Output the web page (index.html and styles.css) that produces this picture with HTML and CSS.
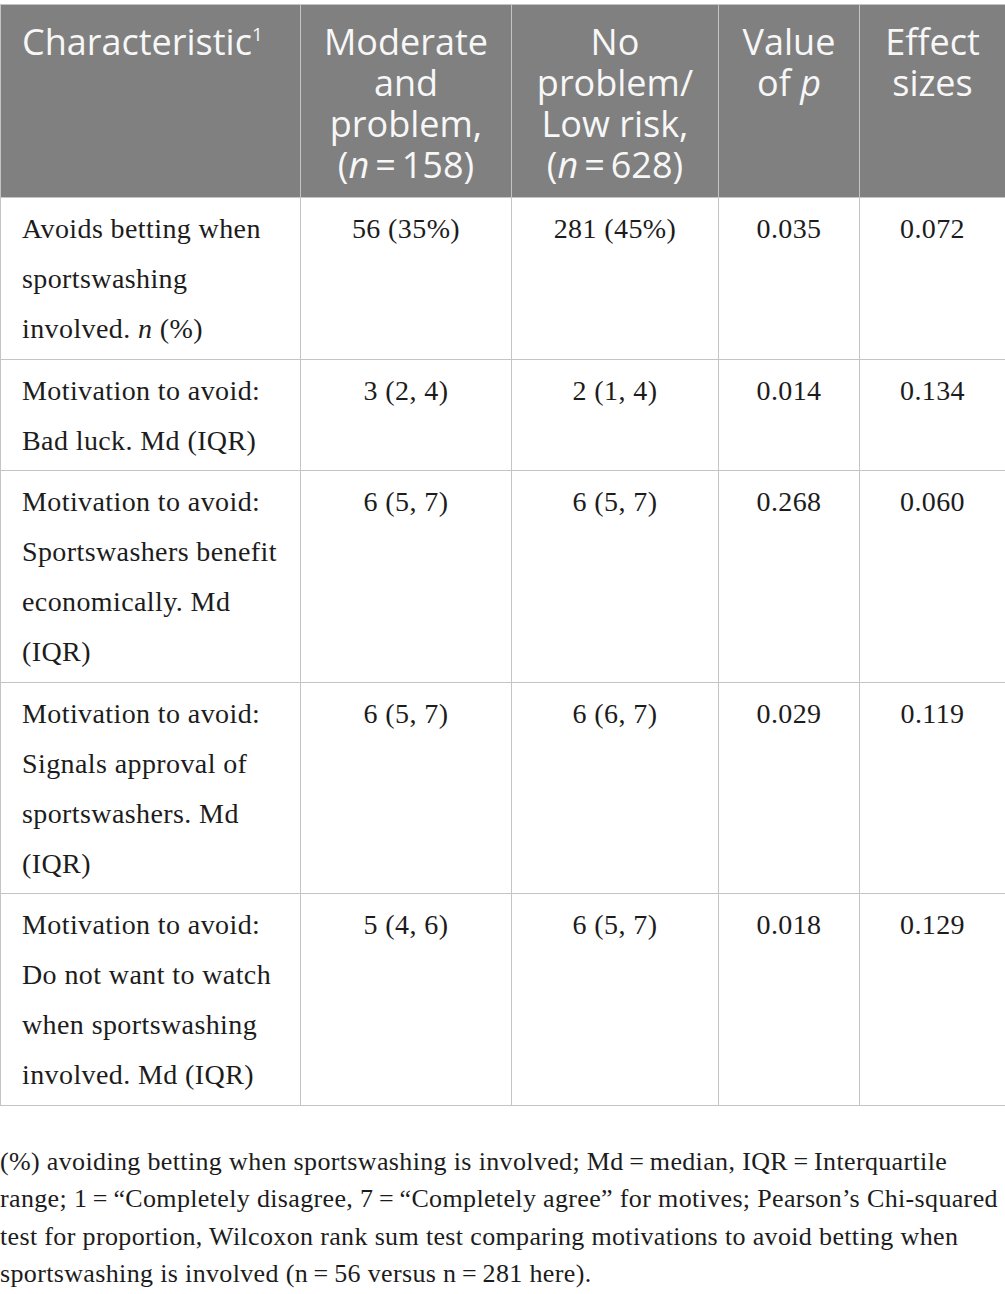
FILE: index.html
```html
<!DOCTYPE html>
<html lang="en">
<head>
  <meta charset="UTF-8">
  <meta name="viewport" content="width=device-width, initial-scale=1.0">
  <title>Sportswashing and betting</title>
  <link rel="stylesheet" href="styles.css">
</head>
<body>
  <table class="data-table">
    <colgroup>
      <col class="col-char">
      <col class="col-mod">
      <col class="col-low">
      <col class="col-p">
      <col class="col-eff">
    </colgroup>
    <thead>
      <tr>
        <th class="first">Characteristic<sup>1</sup></th>
        <th>Moderate and problem, <span class="nowrap">(<i>n</i>&#8201;=&#8201;158)</span></th>
        <th>No problem/ Low risk, <span class="nowrap">(<i>n</i>&#8201;=&#8201;628)</span></th>
        <th>Value of <i>p</i></th>
        <th>Effect sizes</th>
      </tr>
    </thead>
    <tbody>
      <tr>
        <td class="first">Avoids betting when sportswashing involved. <i>n</i> (%)</td>
        <td>56 (35%)</td>
        <td>281 (45%)</td>
        <td>0.035</td>
        <td>0.072</td>
      </tr>
      <tr>
        <td class="first">Motivation to avoid: Bad luck. Md (IQR)</td>
        <td>3 (2, 4)</td>
        <td>2 (1, 4)</td>
        <td>0.014</td>
        <td>0.134</td>
      </tr>
      <tr>
        <td class="first">Motivation to avoid: Sportswashers benefit economically. Md (IQR)</td>
        <td>6 (5, 7)</td>
        <td>6 (5, 7)</td>
        <td>0.268</td>
        <td>0.060</td>
      </tr>
      <tr>
        <td class="first">Motivation to avoid: Signals approval of sportswashers. Md (IQR)</td>
        <td>6 (5, 7)</td>
        <td>6 (6, 7)</td>
        <td>0.029</td>
        <td>0.119</td>
      </tr>
      <tr>
        <td class="first">Motivation to avoid: Do not want to watch when sportswashing involved. Md (IQR)</td>
        <td>5 (4, 6)</td>
        <td>6 (5, 7)</td>
        <td>0.018</td>
        <td>0.129</td>
      </tr>
    </tbody>
  </table>

  <p class="note">(%) avoiding betting when sportswashing is involved; Md&#8201;=&#8201;median, IQR&#8201;=&#8201;Interquartile range; 1&#8201;=&#8201;&ldquo;Completely disagree, 7&#8201;=&#8201;&ldquo;Completely agree&rdquo; for motives; Pearson&rsquo;s Chi-squared test for proportion, Wilcoxon rank sum test comparing motivations to avoid betting when sportswashing is involved (n&#8201;=&#8201;56 versus n&#8201;=&#8201;281 here).</p>
</body>
</html>
```

FILE: styles.css
```css
body {
  margin: 0;
  background-color: white;
  font-family: "Liberation Serif", serif;
  color: #1c1c1c;
}

.data-table {
  margin-top: 4px;
  width: 1005px;
  border-collapse: collapse;
  table-layout: fixed;
}

.col-char { width: 300px; }
.col-mod { width: 211px; }
.col-low { width: 207px; }
.col-p { width: 141px; }
.col-eff { width: 146px; }

.data-table th,
.data-table td {
  box-sizing: border-box;
  border: 1px solid #c4c4c4;
  vertical-align: top;
  text-align: center;
}

.data-table th {
  background-color: #808080;
  color: #f7f7f7;
  font-family: "Open Sans", sans-serif;
  font-weight: 400;
  font-size: 36px;
  line-height: 41px;
  padding: 16px 8px 12px;
}

.data-table th sup {
  font-size: 19px;
  line-height: 0;
  vertical-align: 14px;
}

.nowrap {
  white-space: nowrap;
}

.data-table td {
  font-size: 28px;
  letter-spacing: 0.4px;
  line-height: 50px;
  padding: 6px 10px 4.5px;
}

.data-table .first {
  text-align: left;
  padding-left: 21px;
}

.note {
  margin: 37px 0 0;
  font-size: 26px;
  letter-spacing: 0.35px;
  line-height: 37.5px;
  width: 1000px;
}
```
